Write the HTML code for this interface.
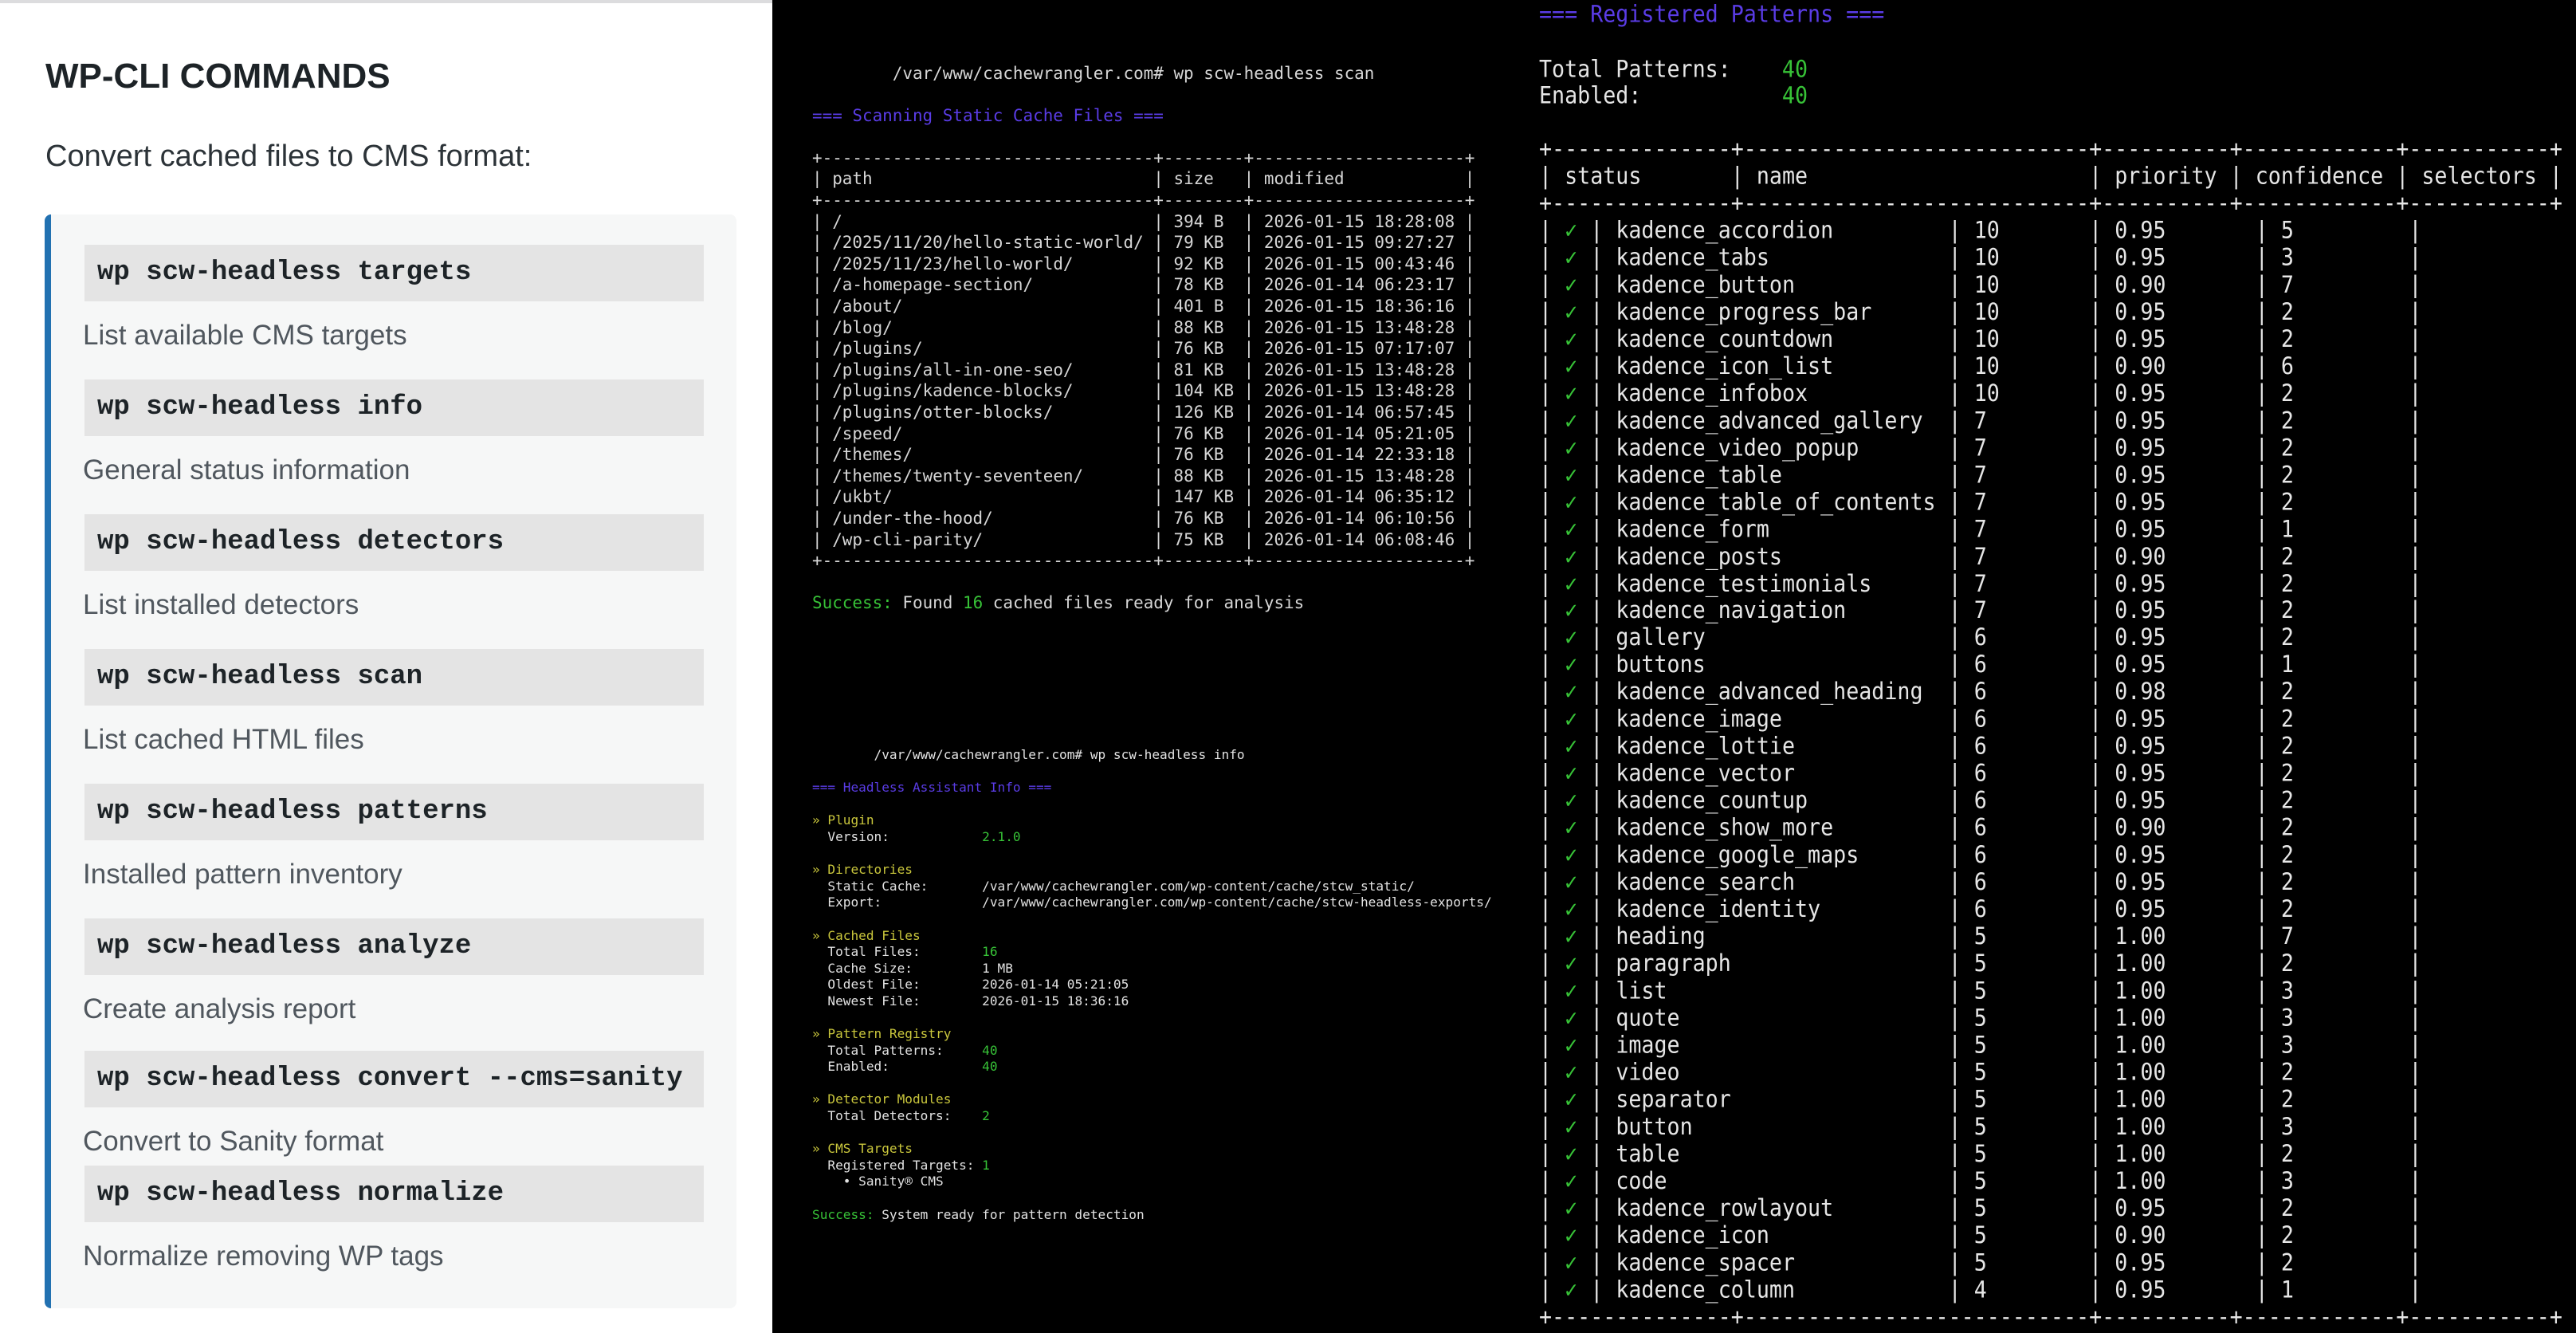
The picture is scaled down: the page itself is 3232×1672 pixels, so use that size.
<!DOCTYPE html>
<html><head><meta charset="utf-8"><style>
*{margin:0;padding:0;box-sizing:border-box}
body{width:3232px;height:1672px;background:#000;position:relative;overflow:hidden}
#left{position:absolute;left:0;top:0;width:969px;height:1672px;background:#fff;border-top:4px solid #dcdcde}
.t{position:absolute;font-family:"Liberation Sans",sans-serif;white-space:nowrap}
#box{position:absolute;left:56px;top:265px;width:868px;height:1372px;background:#f6f7f7;border-left:8px solid #2271b1;border-radius:8px}
.code{position:absolute;left:106px;width:777px;height:71px;background:#e4e4e4;font-family:"Liberation Mono",monospace;font-weight:bold;font-size:34px;line-height:71px;padding-left:16px;color:#1d2327;white-space:pre}
.desc{position:absolute;left:104px;font-family:"Liberation Sans",sans-serif;font-size:35px;line-height:40px;color:#50575e;white-space:nowrap}
pre{position:absolute;font-family:"DejaVu Sans Mono",monospace;margin:0;white-space:pre}
.m1{left:1019px;top:78.5px;font-size:20.93px;line-height:26.6px;color:#d6d6d6}
.m2{left:1019px;top:937px;font-size:16.1px;line-height:20.6px;color:#e2e2e2}
.r{left:1931px;font-size:26.66px;color:#e6e6e6;transform:scaleY(1.1);transform-origin:0 0}
.pu{color:#5a3ce6}.gr{color:#37c237}.ye{color:#c9c63c}
.w{display:inline-block;white-space:pre}
</style></head><body>
<div id="left">
<div class="t" style="left:57px;top:67px;font-size:44px;line-height:50px;font-weight:bold;color:#1d2327">WP-CLI COMMANDS</div>
<div class="t" style="left:57px;top:170px;font-size:38px;line-height:44px;color:#2c3338">Convert cached files to CMS format:</div>
<div id="box"></div>
<div class="code" style="top:303px">wp scw-headless targets</div>
<div class="desc" style="top:397px">List available CMS targets</div>
<div class="code" style="top:472px">wp scw-headless info</div>
<div class="desc" style="top:566px">General status information</div>
<div class="code" style="top:641px">wp scw-headless detectors</div>
<div class="desc" style="top:735px">List installed detectors</div>
<div class="code" style="top:810px">wp scw-headless scan</div>
<div class="desc" style="top:904px">List cached HTML files</div>
<div class="code" style="top:979px">wp scw-headless patterns</div>
<div class="desc" style="top:1073px">Installed pattern inventory</div>
<div class="code" style="top:1148px">wp scw-headless analyze</div>
<div class="desc" style="top:1242px">Create analysis report</div>
<div class="code" style="top:1314px">wp scw-headless convert --cms=sanity</div>
<div class="desc" style="top:1408px">Convert to Sanity format</div>
<div class="code" style="top:1458px">wp scw-headless normalize</div>
<div class="desc" style="top:1552px">Normalize removing WP tags</div>
</div>

<pre class="m1">        /var/www/cachewrangler.com# wp scw-headless scan

<span class="pu">=== Scanning Static Cache Files ===</span>

+---------------------------------+--------+---------------------+
| <span class="w" style="width:32ch">path</span>| <span class="w" style="width:7ch">size</span>| <span class="w" style="width:20ch">modified</span>|
+---------------------------------+--------+---------------------+
| <span class="w" style="width:32ch">/</span>| <span class="w" style="width:7ch">394 B</span>| <span class="w" style="width:20ch">2026-01-15 18:28:08</span>|
| <span class="w" style="width:32ch">/2025/11/20/hello-static-world/</span>| <span class="w" style="width:7ch">79 KB</span>| <span class="w" style="width:20ch">2026-01-15 09:27:27</span>|
| <span class="w" style="width:32ch">/2025/11/23/hello-world/</span>| <span class="w" style="width:7ch">92 KB</span>| <span class="w" style="width:20ch">2026-01-15 00:43:46</span>|
| <span class="w" style="width:32ch">/a-homepage-section/</span>| <span class="w" style="width:7ch">78 KB</span>| <span class="w" style="width:20ch">2026-01-14 06:23:17</span>|
| <span class="w" style="width:32ch">/about/</span>| <span class="w" style="width:7ch">401 B</span>| <span class="w" style="width:20ch">2026-01-15 18:36:16</span>|
| <span class="w" style="width:32ch">/blog/</span>| <span class="w" style="width:7ch">88 KB</span>| <span class="w" style="width:20ch">2026-01-15 13:48:28</span>|
| <span class="w" style="width:32ch">/plugins/</span>| <span class="w" style="width:7ch">76 KB</span>| <span class="w" style="width:20ch">2026-01-15 07:17:07</span>|
| <span class="w" style="width:32ch">/plugins/all-in-one-seo/</span>| <span class="w" style="width:7ch">81 KB</span>| <span class="w" style="width:20ch">2026-01-15 13:48:28</span>|
| <span class="w" style="width:32ch">/plugins/kadence-blocks/</span>| <span class="w" style="width:7ch">104 KB</span>| <span class="w" style="width:20ch">2026-01-15 13:48:28</span>|
| <span class="w" style="width:32ch">/plugins/otter-blocks/</span>| <span class="w" style="width:7ch">126 KB</span>| <span class="w" style="width:20ch">2026-01-14 06:57:45</span>|
| <span class="w" style="width:32ch">/speed/</span>| <span class="w" style="width:7ch">76 KB</span>| <span class="w" style="width:20ch">2026-01-14 05:21:05</span>|
| <span class="w" style="width:32ch">/themes/</span>| <span class="w" style="width:7ch">76 KB</span>| <span class="w" style="width:20ch">2026-01-14 22:33:18</span>|
| <span class="w" style="width:32ch">/themes/twenty-seventeen/</span>| <span class="w" style="width:7ch">88 KB</span>| <span class="w" style="width:20ch">2026-01-15 13:48:28</span>|
| <span class="w" style="width:32ch">/ukbt/</span>| <span class="w" style="width:7ch">147 KB</span>| <span class="w" style="width:20ch">2026-01-14 06:35:12</span>|
| <span class="w" style="width:32ch">/under-the-hood/</span>| <span class="w" style="width:7ch">76 KB</span>| <span class="w" style="width:20ch">2026-01-14 06:10:56</span>|
| <span class="w" style="width:32ch">/wp-cli-parity/</span>| <span class="w" style="width:7ch">75 KB</span>| <span class="w" style="width:20ch">2026-01-14 06:08:46</span>|
+---------------------------------+--------+---------------------+

<span class="gr">Success:</span> Found <span class="gr">16</span> cached files ready for analysis</pre>

<pre class="m2">        /var/www/cachewrangler.com# wp scw-headless info

<span class="pu">=== Headless Assistant Info ===</span>

<span class="ye">» Plugin</span>
  <span class="w" style="width:20ch">Version:</span><span class="gr">2.1.0</span>

<span class="ye">» Directories</span>
  <span class="w" style="width:20ch">Static Cache:</span>/var/www/cachewrangler.com/wp-content/cache/stcw_static/
  <span class="w" style="width:20ch">Export:</span>/var/www/cachewrangler.com/wp-content/cache/stcw-headless-exports/

<span class="ye">» Cached Files</span>
  <span class="w" style="width:20ch">Total Files:</span><span class="gr">16</span>
  <span class="w" style="width:20ch">Cache Size:</span>1 MB
  <span class="w" style="width:20ch">Oldest File:</span>2026-01-14 05:21:05
  <span class="w" style="width:20ch">Newest File:</span>2026-01-15 18:36:16

<span class="ye">» Pattern Registry</span>
  <span class="w" style="width:20ch">Total Patterns:</span><span class="gr">40</span>
  <span class="w" style="width:20ch">Enabled:</span><span class="gr">40</span>

<span class="ye">» Detector Modules</span>
  <span class="w" style="width:20ch">Total Detectors:</span><span class="gr">2</span>

<span class="ye">» CMS Targets</span>
  <span class="w" style="width:20ch">Registered Targets:</span><span class="gr">1</span>
    • Sanity® CMS

<span class="gr">Success:</span> System ready for pattern detection</pre>

<pre class="r pu" style="top:2px;line-height:30.86px">=== Registered Patterns ===</pre>
<pre class="r" style="top:71px;line-height:30px">Total Patterns:    <span class="gr">40</span>
Enabled:           <span class="gr">40</span></pre>

<pre class="r" style="top:171px;line-height:30.97px">+--------------+---------------------------+----------+------------+-----------+
| <span class="w" style="width:13ch">status</span>| <span class="w" style="width:26ch">name</span>| priority | confidence | selectors |
+--------------+---------------------------+----------+------------+-----------+
<div id="rows"></div>+--------------+---------------------------+----------+------------+-----------+</pre>
<script>
var d=[["kadence_accordion",10,"0.95",5],["kadence_tabs",10,"0.95",3],["kadence_button",10,"0.90",7],["kadence_progress_bar",10,"0.95",2],["kadence_countdown",10,"0.95",2],["kadence_icon_list",10,"0.90",6],["kadence_infobox",10,"0.95",2],["kadence_advanced_gallery",7,"0.95",2],["kadence_video_popup",7,"0.95",2],["kadence_table",7,"0.95",2],["kadence_table_of_contents",7,"0.95",2],["kadence_form",7,"0.95",1],["kadence_posts",7,"0.90",2],["kadence_testimonials",7,"0.95",2],["kadence_navigation",7,"0.95",2],["gallery",6,"0.95",2],["buttons",6,"0.95",1],["kadence_advanced_heading",6,"0.98",2],["kadence_image",6,"0.95",2],["kadence_lottie",6,"0.95",2],["kadence_vector",6,"0.95",2],["kadence_countup",6,"0.95",2],["kadence_show_more",6,"0.90",2],["kadence_google_maps",6,"0.95",2],["kadence_search",6,"0.95",2],["kadence_identity",6,"0.95",2],["heading",5,"1.00",7],["paragraph",5,"1.00",2],["list",5,"1.00",3],["quote",5,"1.00",3],["image",5,"1.00",3],["video",5,"1.00",2],["separator",5,"1.00",2],["button",5,"1.00",3],["table",5,"1.00",2],["code",5,"1.00",3],["kadence_rowlayout",5,"0.95",2],["kadence_icon",5,"0.90",2],["kadence_spacer",5,"0.95",2],["kadence_column",4,"0.95",1]];
var h="";d.forEach(function(r){h+='<div>| <span class="gr">✓</span> | <span class="w" style="width:26ch">'+r[0]+'</span>| <span class="w" style="width:9ch">'+r[1]+'</span>| <span class="w" style="width:11ch">'+r[2]+'</span>| <span class="w" style="width:10ch">'+r[3]+'</span>|</div>';});
var e=document.getElementById("rows");e.outerHTML=h;
</script>
</body></html>
